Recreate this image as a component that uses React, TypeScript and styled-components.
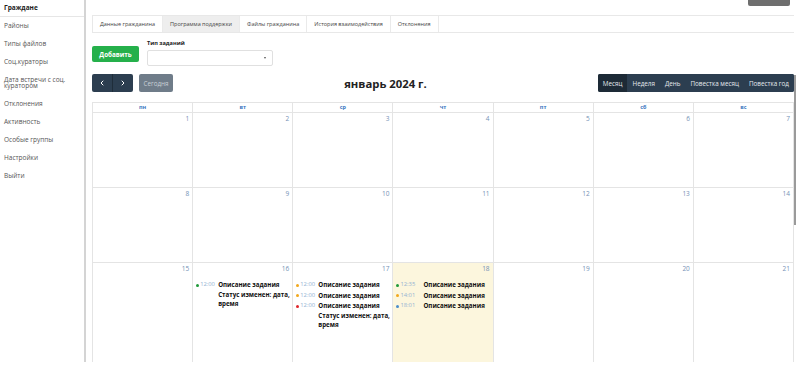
import { ChevronLeft, ChevronRight } from 'lucide-react'
import styled, { createGlobalStyle } from 'styled-components'

const GlobalStyle = createGlobalStyle`
  html, body {
    margin: 0;
    padding: 0;
    background: #fff;
    font-family: 'Open Sans', 'Noto Sans', sans-serif;
    color: #333;
  }
`

const menu = [
  'Районы',
  'Типы файлов',
  'Соц.кураторы',
  'Дата встречи с соц. куратором',
  'Отклонения',
  'Активность',
  'Особые группы',
  'Настройки',
  'Выйти',
]

const tabs = [
  'Данные гражданина',
  'Программа поддержки',
  'Файлы гражданина',
  'История взаимодействия',
  'Отклонения',
]

const weekDays = ['пн', 'вт', 'ср', 'чт', 'пт', 'сб', 'вс']
const views = ['Месяц', 'Неделя', 'День', 'Повестка месяц', 'Повестка год']

type CalEvent = { color: string; time: string; title: string; status?: boolean }

const events: Record<number, CalEvent[]> = {
  16: [{ color: '#1f9a3a', time: '12:00', title: 'Описание задания', status: true }],
  17: [
    { color: '#f2a81d', time: '12:00', title: 'Описание задания' },
    { color: '#f2a81d', time: '12:00', title: 'Описание задания' },
    { color: '#e0262b', time: '12:00', title: 'Описание задания', status: true },
  ],
  18: [
    { color: '#1f9a3a', time: '12:35', title: 'Описание задания' },
    { color: '#f2a81d', time: '14:01', title: 'Описание задания' },
    { color: '#4a8ccc', time: '18:01', title: 'Описание задания' },
  ],
}

const weeks = [
  [1, 2, 3, 4, 5, 6, 7],
  [8, 9, 10, 11, 12, 13, 14],
  [15, 16, 17, 18, 19, 20, 21],
]
const rowHeights = [76, 76, 102]
const TODAY = 18

export default function App() {
  return (
    <>
      <GlobalStyle />
      <Page>
        <Sidebar>
          <MenuHead>Граждане</MenuHead>
          {menu.map((item) => (
            <MenuItem key={item}>{item}</MenuItem>
          ))}
        </Sidebar>
        <Main>
          <TopBar>
            <TopButton />
          </TopBar>
          <Tabs>
            {tabs.map((t, i) => (
              <Tab key={t} $active={i === 1}>
                {t}
              </Tab>
            ))}
          </Tabs>
          <FormRow>
            <AddButton>Добавить</AddButton>
            <Field>
              <FieldLabel>Тип заданий</FieldLabel>
              <Select>
                <Caret />
              </Select>
            </Field>
          </FormRow>
          <CalToolbar>
            <LeftGroup>
              <ButtonGroup>
                <NavButton>
                  <ChevronLeft size={8} strokeWidth={3} />
                </NavButton>
                <NavButton>
                  <ChevronRight size={8} strokeWidth={3} />
                </NavButton>
              </ButtonGroup>
              <TodayButton>Сегодня</TodayButton>
            </LeftGroup>
            <MonthTitle>январь 2024 г.</MonthTitle>
            <ButtonGroup>
              {views.map((v, i) => (
                <ViewButton key={v} $active={i === 0}>
                  {v}
                </ViewButton>
              ))}
            </ButtonGroup>
          </CalToolbar>
          <Calendar>
            {weekDays.map((d) => (
              <HeadCell key={d}>{d}</HeadCell>
            ))}
            {weeks.map((week, wi) =>
              week.map((day) => (
                <DayCell key={day} $height={rowHeights[wi]} $today={day === TODAY}>
                  <DayNumber>{day}</DayNumber>
                  {events[day] && (
                    <EventList>
                      {events[day].map((ev, k) => (
                        <EventRow key={k}>
                          <Dot $color={ev.color} />
                          <EventTime $width={day === TODAY ? 23 : 18}>{ev.time}</EventTime>
                          <EventBody>
                            {ev.title}
                            {ev.status && <Status>Статус изменен: дата, время</Status>}
                          </EventBody>
                        </EventRow>
                      ))}
                    </EventList>
                  )}
                </DayCell>
              )),
            )}
          </Calendar>
        </Main>
        <ScrollThumb />
      </Page>
    </>
  )
}

const Page = styled.div`
  position: relative;
  display: flex;
  height: 362px;
  overflow: hidden;
`

const Sidebar = styled.nav`
  width: 84px;
  flex-shrink: 0;
  border-right: 2px solid #d4d4d4;
  display: flex;
  flex-direction: column;
`

const MenuHead = styled.div`
  height: 16px;
  line-height: 16px;
  padding-left: 4px;
  font-size: 6.5px;
  font-weight: 700;
  color: #222;
  border-bottom: 1px solid #e6e6e6;
`

const MenuItem = styled.div`
  padding: 6px 4px 6px 4px;
  font-size: 6.5px;
  line-height: 6px;
  color: #555;
`

const Main = styled.main`
  flex: 1;
  min-width: 0;
  padding: 0 2px 0 6px;
`

const TopBar = styled.div`
  height: 20px;
  margin-top: -14px;
  display: flex;
  justify-content: flex-end;
  padding-right: 4px;
`

const TopButton = styled.div`
  width: 42px;
  height: 20px;
  background: #6e6e6e;
  border-radius: 2px;
`

const Tabs = styled.div`
  display: flex;
  margin-top: 9px;
  height: 16px;
  border: 1px solid #e8e8e8;
  border-right: none;
`

const Tab = styled.div<{ $active?: boolean }>`
  padding: 0 7px;
  line-height: 16px;
  font-size: 5.5px;
  color: #444;
  background: ${(p) => (p.$active ? '#eeeeee' : '#fff')};
  border-right: 1px solid #eaeaea;
  white-space: nowrap;
`

const FormRow = styled.div`
  display: flex;
  gap: 8px;
  margin-top: 7px;
`

const AddButton = styled.button`
  margin-top: 6px;
  width: 47px;
  height: 16px;
  border: none;
  border-radius: 2px;
  background: #25b04b;
  color: #fff;
  font-family: inherit;
  font-size: 6.3px;
  font-weight: 700;
  padding: 0;
`

const Field = styled.div`
  display: flex;
  flex-direction: column;
`

const FieldLabel = styled.div`
  font-size: 5.6px;
  font-weight: 700;
  color: #222;
  line-height: 6px;
  height: 10px;
`

const Select = styled.div`
  box-sizing: border-box;
  width: 126px;
  height: 16px;
  border: 1px solid #e0e0e0;
  border-radius: 2px;
  display: flex;
  align-items: center;
  justify-content: flex-end;
  padding-right: 6px;
`

const Caret = styled.span`
  width: 0;
  height: 0;
  border-left: 1.5px solid transparent;
  border-right: 1.5px solid transparent;
  border-top: 2px solid #555;
`

const CalToolbar = styled.div`
  display: flex;
  justify-content: space-between;
  align-items: center;
  margin-top: 8px;
  height: 18px;
`

const LeftGroup = styled.div`
  display: flex;
  gap: 6px;
  height: 18px;
`

const ButtonGroup = styled.div`
  display: flex;
  height: 18px;
  border-radius: 2px;
  overflow: hidden;
  background: #2c3e50;
`

const NavButton = styled.div`
  width: 20px;
  display: flex;
  align-items: center;
  justify-content: center;
  color: #fff;
  & + & {
    border-left: 1px solid #1f2d3a;
  }
`

const TodayButton = styled.div`
  width: 34px;
  display: flex;
  align-items: center;
  justify-content: center;
  background: #6f7c89;
  border-radius: 2px;
  color: #c9d0d7;
  font-size: 6.3px;
`

const MonthTitle = styled.h2`
  margin: 0;
  font-size: 11.3px;
  font-weight: 700;
  color: #222;
`

const ViewButton = styled.div<{ $active?: boolean }>`
  display: flex;
  align-items: center;
  padding: 0 5px;
  font-size: 6.3px;
  color: #e4e9ee;
  background: ${(p) => (p.$active ? '#1d2a36' : '#2c3e50')};
  white-space: nowrap;
`

const Calendar = styled.div`
  margin-top: 10px;
  display: grid;
  grid-template-columns: repeat(7, 1fr);
  border-left: 1px solid #e4e4e4;
  border-top: 1px solid #e4e4e4;
`

const HeadCell = styled.div`
  height: 9px;
  line-height: 9px;
  text-align: center;
  font-size: 5.5px;
  font-weight: 700;
  color: #3a76c0;
  border-right: 1px solid #e4e4e4;
  border-bottom: 1px solid #e4e4e4;
`

const DayCell = styled.div<{ $height: number; $today?: boolean }>`
  height: ${(p) => p.$height - 1}px;
  padding: 2px 3px;
  box-sizing: border-box;
  background: ${(p) => (p.$today ? '#fcf6dd' : '#fff')};
  border-right: 1px solid #e4e4e4;
  border-bottom: 1px solid #e4e4e4;
  min-width: 0;
`

const DayNumber = styled.div`
  text-align: right;
  font-size: 6.5px;
  line-height: 8px;
  color: #7592b6;
`

const EventList = styled.div`
  margin-top: 7px;
  margin-right: -3px;
  display: flex;
  flex-direction: column;
  gap: 1px;
`

const EventRow = styled.div`
  display: flex;
  align-items: flex-start;
`

const Dot = styled.span<{ $color: string }>`
  width: 3px;
  height: 3px;
  border-radius: 50%;
  background: ${(p) => p.$color};
  margin-top: 3.5px;
  flex-shrink: 0;
`

const EventTime = styled.span<{ $width: number }>`
  width: ${(p) => p.$width}px;
  flex-shrink: 0;
  padding-left: 1px;
  font-size: 5.8px;
  line-height: 9.5px;
  color: #93b2d2;
`

const EventBody = styled.div`
  flex: 1;
  min-width: 0;
  font-size: 6.2px;
  font-weight: 700;
  line-height: 9.5px;
  color: #111;
`

const Status = styled.div``

const ScrollThumb = styled.div`
  position: absolute;
  right: 0;
  top: 75px;
  width: 2px;
  height: 150px;
  background: #9a9a9a;
`
